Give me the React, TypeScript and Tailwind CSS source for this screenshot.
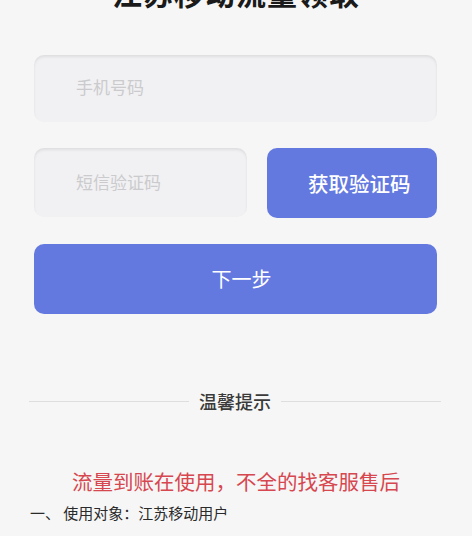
import React from "react";

export default function App() {
  const font = { fontFamily: '"Noto Sans CJK SC", "Noto Sans", sans-serif' };
  return (
    <div
      className="w-[472px] h-[536px] overflow-hidden bg-[#f6f6f6] flex flex-col"
      style={font}
    >
      <div className="mt-[-28px] h-[40px] leading-[40px] text-center text-[30px] font-bold text-[#1a1a1a] tracking-[1px]">
        江苏移动流量领取
      </div>

      <div className="px-[34px] pr-[35px] mt-[43px] flex flex-col">
        <div className="h-[67px] rounded-[10px] bg-[#f1f1f3] shadow-[inset_0_2px_3px_rgba(0,0,0,0.08)] flex items-center pl-[42px] pb-[3px] text-[17px] text-[#cbcbcd]">
          手机号码
        </div>

        <div className="mt-[26px] flex gap-[20px]">
          <div className="w-[213px] h-[69px] rounded-[10px] bg-[#f1f1f3] shadow-[inset_0_2px_3px_rgba(0,0,0,0.08)] flex items-center pl-[42px] pb-[2px] text-[17px] text-[#cbcbcd]">
            短信验证码
          </div>
          <div className="flex-1 h-[70px] rounded-[10px] bg-[#6379e0] flex items-center pl-[41px] text-[20.5px] font-medium text-white">
            获取验证码
          </div>
        </div>

        <div className="mt-[26px] h-[70px] rounded-[10px] bg-[#6379e0] flex items-center justify-center pl-[12px] text-[20px] text-white">
          下一步
        </div>
      </div>

      <div className="mt-[75px] mx-[29px] mr-[31px] flex items-center gap-[10px]">
        <div className="flex-1 h-px bg-[#dedede]" />
        <div className="text-[18px] font-medium text-[#3a3a3a] leading-[24px]">温馨提示</div>
        <div className="flex-1 h-px bg-[#dedede]" />
      </div>

      <div className="mt-[54px] text-center text-[20.5px] text-[#d6474f] leading-[28px]">
        流量到账在使用，不全的找客服售后
      </div>

      <div className="mt-[7px] pl-[30px] text-[15px] text-[#2a2a2a] leading-[22px]">
        一、 使用对象：江苏移动用户
      </div>
    </div>
  );
}
